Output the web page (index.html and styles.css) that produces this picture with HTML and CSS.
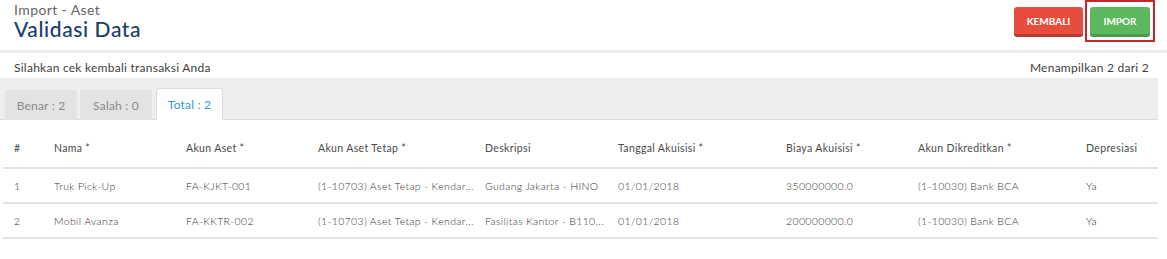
FILE: index.html
```html
<!DOCTYPE html>
<html>
<head>
<meta charset="utf-8">
<link rel="stylesheet" href="styles.css">
</head>
<body>
<div class="page">
  <header class="header">
    <div class="titles">
      <div class="crumb">Import - Aset</div>
      <h1 class="title">Validasi Data</h1>
    </div>
    <div class="actions">
      <button class="btn btn-red">KEMBALI</button>
      <div class="highlight"><button class="btn btn-green">IMPOR</button></div>
    </div>
  </header>
  <div class="sep"></div>
  <div class="content">
    <div class="info">
      <span>Silahkan cek kembali transaksi Anda</span>
      <span>Menampilkan 2 dari 2</span>
    </div>
    <div class="tabs">
      <div class="tab tab-benar">Benar : 2</div>
      <div class="tab tab-salah">Salah : 0</div>
      <div class="tab tab-active">Total : 2</div>
    </div>
    <table class="grid">
      <thead>
        <tr>
          <th class="c1">#</th>
          <th class="c2">Nama *</th>
          <th class="c3">Akun Aset *</th>
          <th class="c4">Akun Aset Tetap *</th>
          <th class="c5">Deskripsi</th>
          <th class="c6">Tanggal Akuisisi *</th>
          <th class="c7">Biaya Akuisisi *</th>
          <th class="c8">Akun Dikreditkan *</th>
          <th class="c9">Depresiasi</th>
        </tr>
      </thead>
      <tbody>
        <tr>
          <td>1</td>
          <td>Truk Pick-Up</td>
          <td>FA-KJKT-001</td>
          <td>(1-10703) Aset Tetap - Kendar...</td>
          <td>Gudang Jakarta - HINO</td>
          <td>01/01/2018</td>
          <td>350000000.0</td>
          <td>(1-10030) Bank BCA</td>
          <td>Ya</td>
        </tr>
        <tr>
          <td>2</td>
          <td>Mobil Avanza</td>
          <td>FA-KKTR-002</td>
          <td>(1-10703) Aset Tetap - Kendar...</td>
          <td>Fasilitas Kantor - B110...</td>
          <td>01/01/2018</td>
          <td>200000000.0</td>
          <td>(1-10030) Bank BCA</td>
          <td>Ya</td>
        </tr>
      </tbody>
    </table>
  </div>
</div>
</body>
</html>
```

FILE: styles.css
```css
* { box-sizing: border-box; }
html, body { margin: 0; padding: 0; background: #fff; }
body {
  font-family: "Lato", "Open Sans", sans-serif;
  color: #555;
  width: 1167px;
  height: 259px;
  overflow: hidden;
}
.header {
  height: 50px;
  display: flex;
  justify-content: space-between;
  align-items: flex-start;
  padding: 0 12px 0 14px;
}
.titles { padding-top: 2px; }
.crumb {
  font-size: 14px;
  color: #666;
  line-height: 15px;
  letter-spacing: 0.4px;
}
.title {
  margin: 0;
  font-size: 21px;
  font-weight: 500;
  color: #1b3d6e;
  line-height: 23px;
  letter-spacing: 0.6px;
}
.actions {
  display: flex;
  align-items: flex-start;
  gap: 2px;
}
.btn {
  border: none;
  color: #fff;
  font-family: "Lato", sans-serif;
  font-weight: 700;
  font-size: 10px;
  border-radius: 3px;
  height: 30px;
  cursor: pointer;
  letter-spacing: 0;
}
.btn-red {
  background: #e74c3c;
  border-bottom: 3px solid #b83a2e;
  width: 69px;
  margin-top: 7px;
}
.highlight {
  border: 2px solid #c7252c;
  padding: 5px 3px 4px 3px;
  height: 42px;
}
.btn-green {
  background: #5cb85c;
  border-bottom: 3px solid #479a47;
  width: 60px;
}
.sep {
  height: 3px;
  background: #eceef1;
}
.content {
  width: 1158px;
}
.info {
  display: flex;
  justify-content: space-between;
  font-size: 12px;
  letter-spacing: 0.25px;
  color: #3f3f3f;
  height: 25px;
  align-items: center;
  padding: 4px 9px 0 14px;
}
.tabs {
  background: #eceef0;
  height: 42px;
  display: flex;
  align-items: flex-end;
  padding-left: 5px;
  border-bottom: 1px solid #dcdcdc;
}
.tab {
  height: 30px;
  width: 72px;
  background: #e3e3e3;
  color: #8a8a8a;
  font-size: 12px;
  letter-spacing: 0.2px;
  display: flex;
  align-items: center;
  justify-content: center;
  border-radius: 3px 3px 0 0;
  margin-bottom: -1px;
}
.tab-benar { margin-right: 3px; }
.tab-salah { margin-right: 4px; }
.tab-active {
  width: 67px;
  height: 32px;
  background: #fff;
  color: #2e9dcc;
  border: 1px solid #dcdcdc;
  border-bottom: 1px solid #fff;
}
.grid {
  border-collapse: collapse;
  table-layout: fixed;
  width: 1155px;
  margin-left: 3px;
  font-size: 10.5px;
  letter-spacing: 0.35px;
}
.grid th {
  text-align: left;
  font-weight: 400;
  color: #4a4a4a;
  height: 48px;
  padding: 9px 0 0 11px;
  border-bottom: 2px solid #e3e3e3;
  white-space: nowrap;
}
.grid td {
  height: 35px;
  padding: 0 0 0 11px;
  border-bottom: 2px solid #e3e3e3;
  color: #333;
  font-weight: 300;
  white-space: nowrap;
  overflow: hidden;
}
.c1 { width: 40px; }
.c2 { width: 132px; }
.c3 { width: 132px; }
.c4 { width: 167px; }
.c5 { width: 133px; }
.c6 { width: 168px; }
.c7 { width: 132px; }
.c8 { width: 168px; }
.c9 { width: 83px; }
```
